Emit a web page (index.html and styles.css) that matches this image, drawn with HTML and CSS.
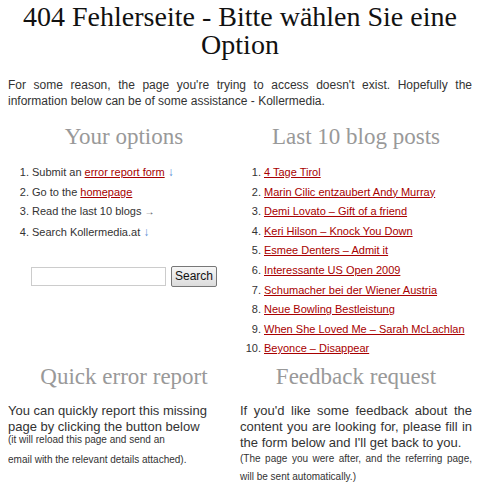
FILE: index.html
```html
<!DOCTYPE html>
<html lang="de">
<head>
  <meta charset="UTF-8">
  <title>404 Fehlerseite</title>
  <link rel="stylesheet" href="styles.css">
</head>
<body>

<h1>404 Fehlerseite - Bitte wählen Sie eine Option</h1>

<p class="intro">For some reason, the page you're trying to access doesn't exist. Hopefully the information below can be of some assistance - Kollermedia.</p>

<div class="grid">
  <div class="col">
    <h2>Your options</h2>
    <ol>
      <li>Submit an <a href="#report">error report form</a> <span class="down">↓</span></li>
      <li>Go to the <a href="#">homepage</a></li>
      <li>Read the last 10 blogs <span class="right">→</span></li>
      <li>Search Kollermedia.at <span class="down">↓</span></li>
    </ol>
    <form class="search">
      <input type="text">
      <button type="button">Search</button>
    </form>
  </div>

  <div class="col">
    <h2>Last 10 blog posts</h2>
    <ol class="posts">
      <li><a href="#">4 Tage Tirol</a></li>
      <li><a href="#">Marin Cilic entzaubert Andy Murray</a></li>
      <li><a href="#">Demi Lovato – Gift of a friend</a></li>
      <li><a href="#">Keri Hilson – Knock You Down</a></li>
      <li><a href="#">Esmee Denters – Admit it</a></li>
      <li><a href="#">Interessante US Open 2009</a></li>
      <li><a href="#">Schumacher bei der Wiener Austria</a></li>
      <li><a href="#">Neue Bowling Bestleistung</a></li>
      <li><a href="#">When She Loved Me – Sarah McLachlan</a></li>
      <li><a href="#">Beyonce – Disappear</a></li>
    </ol>
  </div>

  <div class="col lower" id="report">
    <h2>Quick error report</h2>
    <p class="text narrow">You can quickly report this missing page by clicking the button below</p>
    <p class="small left">(it will reload this page and send an<br>email with the relevant details attached).</p>
  </div>

  <div class="col lower">
    <h2>Feedback request</h2>
    <p class="text just">If you'd like some feedback about the content you are looking for, please fill in the form below and I'll get back to you.</p>
    <p class="small just">(The page you were after, and the referring page, will be sent automatically.)</p>
  </div>
</div>

</body>
</html>
```

FILE: styles.css
```css
body {
  margin: 0 8px 8px;
  font-family: "Liberation Sans", Arial, sans-serif;
  color: #333;
  background: #fff;
}

h1 {
  font-family: "Liberation Serif", Georgia, serif;
  font-weight: normal;
  font-size: 28px;
  line-height: 28px;
  text-align: center;
  color: #111;
  margin: 3px 0 0;
}

.intro {
  font-size: 12px;
  line-height: 16px;
  text-align: justify;
  margin: 18px 0 0;
}

.grid {
  display: grid;
  grid-template-columns: 232px 232px;
  margin-top: 14px;
}

h2 {
  font-family: "Liberation Serif", Georgia, serif;
  font-weight: normal;
  font-size: 23px;
  line-height: 28px;
  color: #999;
  text-align: center;
  margin: 0 0 13px;
}

ol {
  margin: 0;
  padding-left: 24px;
  font-size: 11px;
}

ol li {
  line-height: 16px;
  margin-bottom: 3.6px;
}

a {
  color: #a80000;
  text-decoration: underline;
}

.down {
  color: #5b8fd6;
  font-size: 12px;
}

.right {
  color: #555;
  font-size: 10px;
}

.search {
  display: flex;
  align-items: center;
  gap: 5px;
  margin: 26px 0 0 23px;
}

.search input {
  width: 131px;
  height: 15px;
  padding: 1px;
  border: 1px solid #ccc;
  font-size: 12px;
}

.search button {
  font-family: "Liberation Sans", Arial, sans-serif;
  font-size: 12px;
  color: #111;
  height: 21px;
  padding: 0 3px;
  border: 1px solid #777;
  border-radius: 2px;
  background: linear-gradient(#f6f6f6, #dcdcdc);
}

.lower h2 {
  margin: 3px 0 12px;
}

.text {
  font-size: 13px;
  line-height: 16px;
  margin: 0;
}

.narrow {
  max-width: 215px;
}

.just {
  text-align: justify;
}

.small {
  font-size: 10px;
  margin: 0;
}

.small.left {
  line-height: 20px;
  margin-top: -5px;
}

.small.just {
  line-height: 18px;
  margin-top: -1px;
}
```
